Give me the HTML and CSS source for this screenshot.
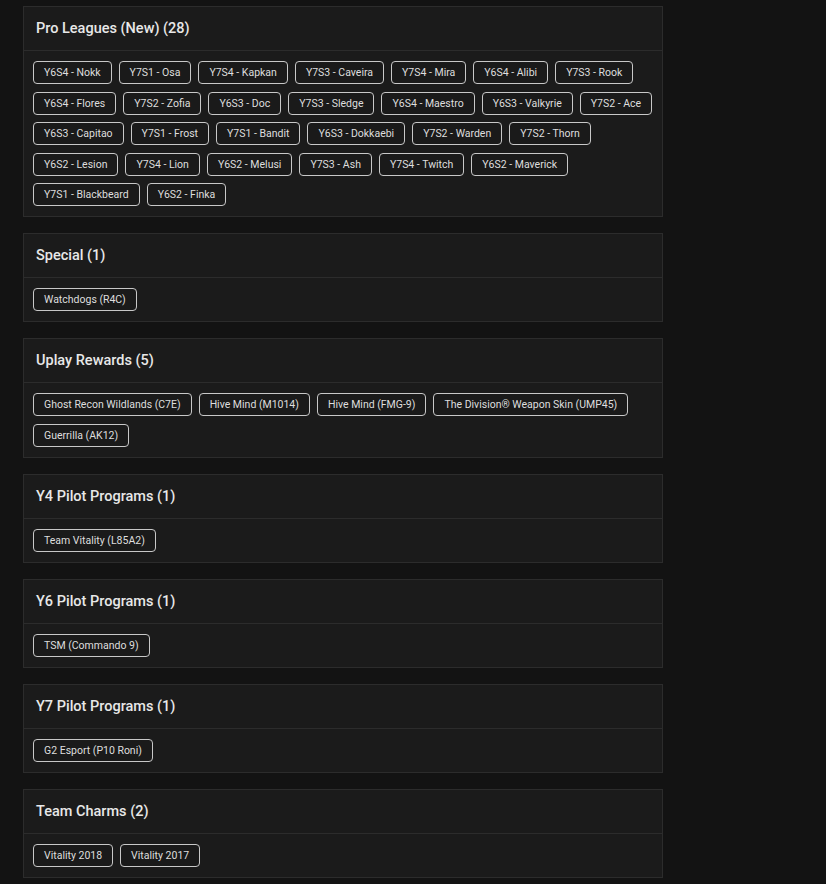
FILE: index.html
```html
<!DOCTYPE html>
<html lang="en">
<head>
<meta charset="utf-8">
<title>Skins</title>
<link rel="stylesheet" href="styles.css">
</head>
<body>
<main class="groups">
  <section class="group">
    <h2 class="group-title">Pro Leagues (New) (28)</h2>
    <div class="chips">
      <span class="chip">Y6S4 - Nokk</span>
      <span class="chip">Y7S1 - Osa</span>
      <span class="chip">Y7S4 - Kapkan</span>
      <span class="chip">Y7S3 - Caveira</span>
      <span class="chip">Y7S4 - Mira</span>
      <span class="chip">Y6S4 - Alibi</span>
      <span class="chip">Y7S3 - Rook</span>
      <span class="chip">Y6S4 - Flores</span>
      <span class="chip">Y7S2 - Zofia</span>
      <span class="chip">Y6S3 - Doc</span>
      <span class="chip">Y7S3 - Sledge</span>
      <span class="chip">Y6S4 - Maestro</span>
      <span class="chip">Y6S3 - Valkyrie</span>
      <span class="chip">Y7S2 - Ace</span>
      <span class="chip">Y6S3 - Capitao</span>
      <span class="chip">Y7S1 - Frost</span>
      <span class="chip">Y7S1 - Bandit</span>
      <span class="chip">Y6S3 - Dokkaebi</span>
      <span class="chip">Y7S2 - Warden</span>
      <span class="chip">Y7S2 - Thorn</span>
      <span class="chip">Y6S2 - Lesion</span>
      <span class="chip">Y7S4 - Lion</span>
      <span class="chip">Y6S2 - Melusi</span>
      <span class="chip">Y7S3 - Ash</span>
      <span class="chip">Y7S4 - Twitch</span>
      <span class="chip">Y6S2 - Maverick</span>
      <span class="chip">Y7S1 - Blackbeard</span>
      <span class="chip">Y6S2 - Finka</span>
    </div>
  </section>
  <section class="group">
    <h2 class="group-title">Special (1)</h2>
    <div class="chips">
      <span class="chip">Watchdogs (R4C)</span>
    </div>
  </section>
  <section class="group">
    <h2 class="group-title">Uplay Rewards (5)</h2>
    <div class="chips">
      <span class="chip">Ghost Recon Wildlands (C7E)</span>
      <span class="chip">Hive Mind (M1014)</span>
      <span class="chip">Hive Mind (FMG-9)</span>
      <span class="chip">The Division® Weapon Skin (UMP45)</span>
      <span class="chip">Guerrilla (AK12)</span>
    </div>
  </section>
  <section class="group">
    <h2 class="group-title">Y4 Pilot Programs (1)</h2>
    <div class="chips">
      <span class="chip">Team Vitality (L85A2)</span>
    </div>
  </section>
  <section class="group">
    <h2 class="group-title">Y6 Pilot Programs (1)</h2>
    <div class="chips">
      <span class="chip">TSM (Commando 9)</span>
    </div>
  </section>
  <section class="group">
    <h2 class="group-title">Y7 Pilot Programs (1)</h2>
    <div class="chips">
      <span class="chip">G2 Esport (P10 Roni)</span>
    </div>
  </section>
  <section class="group">
    <h2 class="group-title">Team Charms (2)</h2>
    <div class="chips">
      <span class="chip">Vitality 2018</span>
      <span class="chip">Vitality 2017</span>
    </div>
  </section>
</main>
</body>
</html>
```

FILE: styles.css
```css
html, body {
  margin: 0;
  padding: 0;
  background: #131313;
}

body {
  font-family: Roboto, "Noto Sans", "DejaVu Sans", sans-serif;
  color: #e6e6e6;
}

.groups {
  display: flex;
  flex-direction: column;
  gap: 16px;
  width: 640px;
  padding: 6px 0 0 23px;
}

.group {
  background: #1b1b1b;
  border: 1px solid #2c2c2c;
}

.group-title {
  margin: 0;
  height: 43px;
  padding: 0 12px;
  display: flex;
  align-items: center;
  font-size: 14.5px;
  font-weight: 500;
  color: #e8e8e8;
  border-bottom: 1px solid #2c2c2c;
}

.chips {
  display: flex;
  flex-wrap: wrap;
  gap: 7.5px 7px;
  padding: 10px 9px;
}

.chip {
  display: inline-block;
  height: 21px;
  line-height: 21px;
  padding: 0 10px;
  font-size: 10.5px;
  color: #dedede;
  background: #1a1a1a;
  border: 1px solid #c8c8c8;
  border-radius: 4px;
  white-space: nowrap;
}
```
